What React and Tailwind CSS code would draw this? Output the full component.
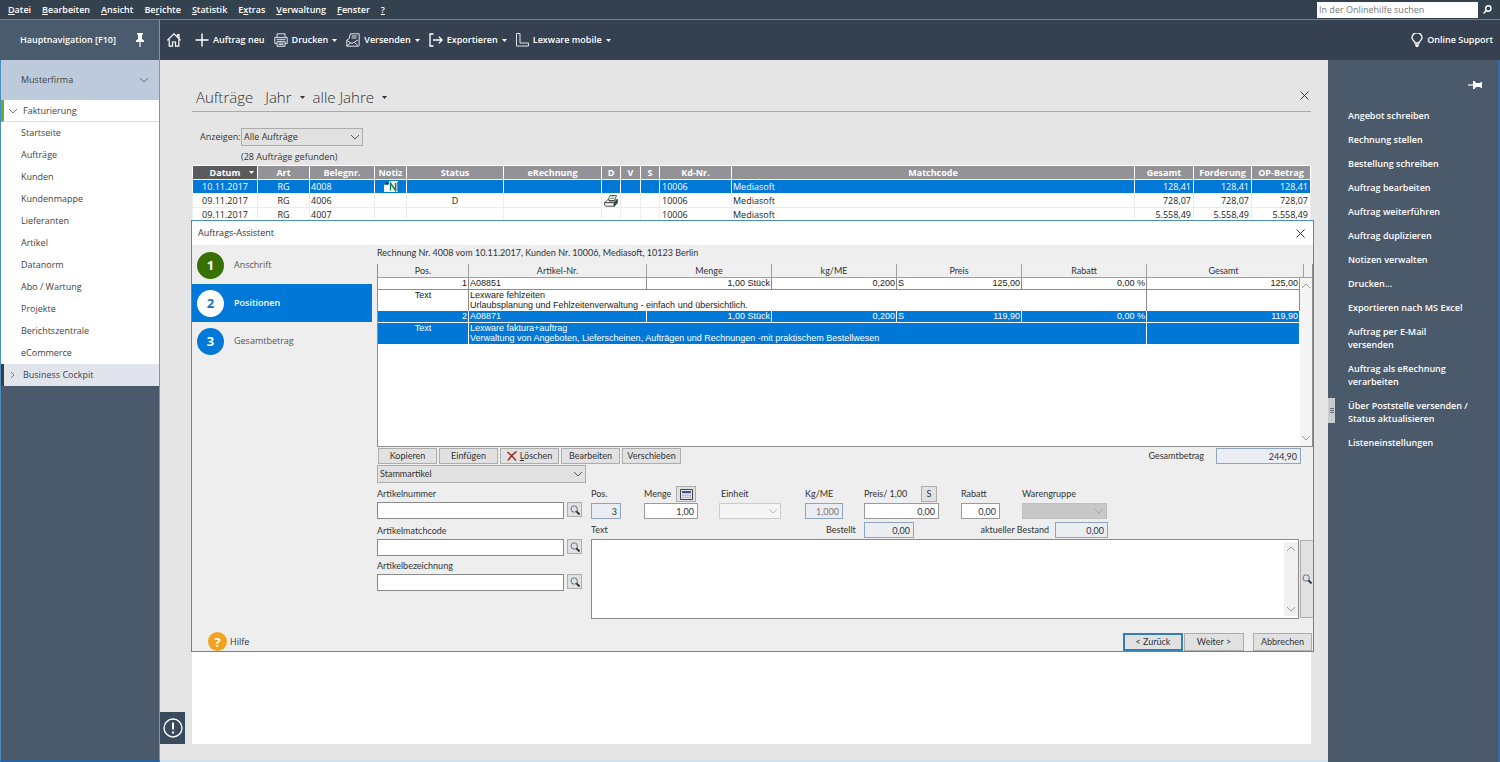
import clsx from 'clsx';

const MENU = [
  ['', 'D', 'atei'],
  ['', 'B', 'earbeiten'],
  ['', 'A', 'nsicht'],
  ['Be', 'r', 'ichte'],
  ['', 'S', 'tatistik'],
  ['E', 'x', 'tras'],
  ['', 'V', 'erwaltung'],
  ['', 'F', 'enster'],
  ['', '?', ''],
];

const NAV_ITEMS = [
  'Startseite',
  'Aufträge',
  'Kunden',
  'Kundenmappe',
  'Lieferanten',
  'Artikel',
  'Datanorm',
  'Abo / Wartung',
  'Projekte',
  'Berichtszentrale',
  'eCommerce',
];

const ACTIONS = [
  'Angebot schreiben',
  'Rechnung stellen',
  'Bestellung schreiben',
  'Auftrag bearbeiten',
  'Auftrag weiterführen',
  'Auftrag duplizieren',
  'Notizen verwalten',
  'Drucken...',
  'Exportieren nach MS Excel',
  'Auftrag per E-Mail versenden',
  'Auftrag als eRechnung verarbeiten',
  'Über Poststelle versenden / Status aktualisieren',
  'Listeneinstellungen',
];

const ORDER_COLUMNS = [
  { label: 'Datum', width: 'w-[65px]' },
  { label: 'Art', width: 'w-[52px]' },
  { label: 'Belegnr.', width: 'w-[65px]' },
  { label: 'Notiz', width: 'w-[32px]' },
  { label: 'Status', width: 'w-[97px]' },
  { label: 'eRechnung', width: 'w-[98px]' },
  { label: 'D', width: 'w-[19px]' },
  { label: 'V', width: 'w-[20px]' },
  { label: 'S', width: 'w-[19px]' },
  { label: 'Kd-Nr.', width: 'w-[72px]' },
  { label: 'Matchcode', width: '' },
  { label: 'Gesamt', width: 'w-[59px]' },
  { label: 'Forderung', width: 'w-[58px]' },
  { label: 'OP-Betrag', width: 'w-[59px]' },
];

const ORDERS = [
  { date: '10.11.2017', type: 'RG', number: '4008', note: true, status: '', printed: false, amount: '128,41' },
  { date: '09.11.2017', type: 'RG', number: '4006', note: false, status: 'D', printed: true, amount: '728,07' },
  { date: '09.11.2017', type: 'RG', number: '4007', note: false, status: '', printed: false, amount: '5.558,49' },
];

const POSITIONS = [
  {
    pos: 1,
    article: 'A08851',
    price: '125,00',
    title: 'Lexware fehlzeiten',
    text: 'Urlaubsplanung und Fehlzeitenverwaltung - einfach und übersichtlich.',
  },
  {
    pos: 2,
    article: 'A08871',
    price: '119,90',
    title: 'Lexware faktura+auftrag',
    text: 'Verwaltung von Angeboten, Lieferscheinen, Aufträgen und Rechnungen -mit praktischem Bestellwesen',
  },
];

const STEPS = [
  { label: 'Anschrift', circle: 'bg-[#387002] text-white' },
  { label: 'Positionen', circle: 'bg-white text-[#1b6fb5]', active: true },
  { label: 'Gesamtbetrag', circle: 'bg-[#0078d7] text-white' },
];

function Chevron({ className, d = 'M1 1l4 4 4-4' }) {
  return (
    <svg viewBox="0 0 10 6" className={clsx('h-[6px] w-[10px] fill-none stroke-current', className)}>
      <path d={d} />
    </svg>
  );
}

function Caret({ className }) {
  return (
    <svg viewBox="0 0 5 3" className={clsx('h-[3px] w-[5px] fill-current', className)}>
      <path d="M0 0h5L2.5 3z" />
    </svg>
  );
}

function CloseIcon() {
  return (
    <svg viewBox="0 0 9 9" className="h-[9px] w-[9px] fill-none stroke-[#333]">
      <path d="M.5.5l8 8M8.5.5l-8 8" />
    </svg>
  );
}

function HomeIcon() {
  return (
    <svg viewBox="0 0 16 16" className="size-4 fill-none stroke-white stroke-[1.2]">
      <path d="M1.300 8.400L8 1.800l6.700 6.600M11.500 5V2.600h1.500v3.800M3.200 7.500v6.700h3.300V10h3v4.200h3.300V7.500" />
    </svg>
  );
}

function PlusIcon() {
  return (
    <svg viewBox="0 0 14 14" className="size-[14px] fill-none stroke-white stroke-[1.4]">
      <path d="M7 .5v13M.5 7h13" />
    </svg>
  );
}

function PrinterIcon() {
  return (
    <svg viewBox="0 0 14 14" className="size-[14px] fill-none stroke-[#dde3e9]">
      <path d="M3 4V.8h8V4M3 10.500H.8V4.400h12.400v6.100H11M2.500 6.300h9M3 8.300h8v5H3zM4.500 10h5M4.500 11.600h5" />
    </svg>
  );
}

function SendIcon() {
  return (
    <svg viewBox="0 0 14 14" className="size-[14px] fill-none stroke-[#dde3e9]">
      <path d="M3.200 5.500L4.300.8h8.900v11.500M5.800 3h5M5.500 5h5M3.200 5.500L.8 7v6.200h11.700l.7-1M.8 7.500l5.200 3 6-3.500M.8 13l4-3.200M12.300 13L8.500 9.500" />
    </svg>
  );
}

function ExportIcon() {
  return (
    <svg viewBox="0 0 14 14" className="size-[14px] fill-none stroke-white stroke-[1.3]">
      <path d="M4.500 1H1v12h3.500M4 7h9M9.800 3.600L13.200 7l-3.400 3.400" />
    </svg>
  );
}

function LexwareIcon() {
  return (
    <svg viewBox="0 0 13 14" className="h-[14px] w-[13px] fill-none stroke-[#dde3e9]">
      <path d="M.5.5h3.500v9.500h8.500v3H.5z" />
    </svg>
  );
}

function BulbIcon() {
  return (
    <svg viewBox="0 0 12 14" className="h-[14px] w-3 fill-none stroke-white stroke-[1.3]">
      <path d="M4 10c0-2-3-2.500-3-5.200a5 5 0 0110 0C11 7.500 8 8 8 10zM4 12h4M4.800 13.400h2.400" />
    </svg>
  );
}

function PinIcon({ className }) {
  return (
    <svg viewBox="0 0 8 14" className={clsx('h-[14px] w-2 fill-white', className)}>
      <path d="M1 0h6v1.500H6V6l2 1.500V9H0V7.500L2 6V1.500H1z" />
      <path d="M3 9h2v5H3z" opacity=".6" />
    </svg>
  );
}

function NoteIcon() {
  return (
    <svg viewBox="0 0 14 11" className="h-[11px] w-[14px]">
      <path d="M0 3.500h5V0h9v11H0z" fill="#fff" />
      <path d="M.5 3.500L4 .5v3z" fill="#123" />
      <path d="M6.500 9.500V2l5 7.500V2" fill="none" stroke="#1c7a4a" strokeWidth="1.400" />
      <path d="M13.300 1v9.500" stroke="#333" fill="none" strokeWidth=".8" />
    </svg>
  );
}

function PrintedIcon() {
  return (
    <svg viewBox="0 0 14 12" className="h-3 w-[14px]">
      <path d="M4 5.500L6 .5h6.500l-2 5z" fill="#fff" stroke="#333" strokeWidth=".8" />
      <path d="M6 3.500h4M6.800 2h4" stroke="#4a8a4a" strokeWidth=".7" />
      <path d="M.5 7.500L3.500 4.800h2L5 6h5.500l.5-1.200h2.300l-3 2.700z" fill="#e4ece4" stroke="#333" strokeWidth=".7" />
      <path d="M.5 7.500h9.800v3.800H1.500l-1-1z" fill="#c4dcc0" stroke="#333" strokeWidth=".7" />
      <path d="M10.300 7.500l3-3v3.600l-3 3.200z" fill="#2f5a2f" stroke="#222" strokeWidth=".7" />
      <path d="M2 9.500h6.500" stroke="#fff" />
    </svg>
  );
}

function LensIcon() {
  return (
    <svg viewBox="0 0 10 10" className="size-[10px] flex-none fill-none">
      <circle cx="4.200" cy="4" r="3.200" fill="#d5e2ea" stroke="#666" strokeWidth=".9" />
      <path d="M6.500 6.300l3 3.200" stroke="#223" strokeWidth="1.800" />
    </svg>
  );
}

function CalculatorIcon() {
  return (
    <svg viewBox="0 0 13 11" className="h-[11px] w-[13px]">
      <path d="M.5.5h12v10H.5z" fill="#e8e8f2" stroke="#444" />
      <path d="M2 2h9v2.200H2z" fill="#4a4f8c" />
      <path d="M2 6.200h9M2 8.300h9" stroke="#8a8aa0" strokeDasharray="1.500 1" />
    </svg>
  );
}

function SelectBox({ id, label, options = [''], disabled, className, chevron = 'text-[#555]' }) {
  return (
    <div className="relative flex">
      <select
        id={id}
        aria-label={label}
        disabled={disabled}
        className={clsx('w-full appearance-none rounded-none border pl-[2px] opacity-100 outline-none', className)}
      >
        {options.map((option) => (
          <option key={option}>{option}</option>
        ))}
      </select>
      <Chevron className={clsx('pointer-events-none absolute top-1/2 right-[3px] -translate-y-1/2', chevron)} />
    </div>
  );
}

function PushButton({ children, className }) {
  return (
    <button
      type="button"
      className={clsx('flex items-center justify-center border bg-[#e1e1e1] whitespace-nowrap', className)}
    >
      {children}
    </button>
  );
}

function NumberField({ id, value, readOnly, className }) {
  return (
    <input
      id={id}
      defaultValue={value}
      readOnly={readOnly}
      className={clsx(
        'h-4 rounded-none border px-[3px] text-right outline-none',
        readOnly ? 'border-[#8fa5bd] bg-[#eaeef3]' : 'border-[#9a9a9a] bg-white',
        className,
      )}
    />
  );
}

function MenuBar() {
  return (
    <header className="flex h-5 flex-none items-center justify-between border-b border-[#6e8391] bg-[#34424f] font-semibold text-white">
      <nav className="flex gap-[11px] pl-2">
        {MENU.map(([before, key, after]) => (
          <button key={before + key + after} type="button">
            {before}
            <span className="underline underline-offset-1">{key}</span>
            {after}
          </button>
        ))}
      </nav>
      <form className="flex items-center gap-[5px] pr-2">
        <input
          aria-label="In der Onlinehilfe suchen"
          placeholder="In der Onlinehilfe suchen"
          className="h-4 w-[161px] bg-white px-[2px] font-normal text-black outline-none placeholder:text-[#777]"
        />
        <button type="button" aria-label="Suchen">
          <svg viewBox="0 0 9 9" className="size-[9px] fill-none stroke-white stroke-[1.4]">
            <circle cx="5.300" cy="3.500" r="2.700" />
            <path d="M3.300 5.600L.6 8.400" />
          </svg>
        </button>
      </form>
    </header>
  );
}

function ToolButton({ icon, label, menu, className }) {
  return (
    <button type="button" className={clsx('flex items-center gap-1 whitespace-nowrap', className)}>
      {icon}
      {label}
      {menu && <Caret />}
    </button>
  );
}

function Toolbar() {
  return (
    <div className="flex h-10 flex-none bg-[#354151] font-semibold text-white">
      <div className="flex w-40 flex-none items-center justify-between border-r border-[#8096a6] bg-[#495b6c] pr-[15px] pl-5">
        Hauptnavigation [F10]
        <button type="button" aria-label="Navigation anheften">
          <PinIcon />
        </button>
      </div>
      <div className="flex flex-1 items-center pr-[7px] pl-[6px]">
        <button type="button" aria-label="Startseite">
          <HomeIcon />
        </button>
        <ToolButton icon={<PlusIcon />} label="Auftrag neu" className="ml-[13px]" />
        <ToolButton icon={<PrinterIcon />} label="Drucken" menu className="ml-[9px]" />
        <ToolButton icon={<SendIcon />} label="Versenden" menu className="ml-[9px]" />
        <ToolButton icon={<ExportIcon />} label="Exportieren" menu className="ml-[9px]" />
        <ToolButton icon={<LexwareIcon />} label="Lexware mobile" menu className="ml-[9px]" />
        <ToolButton icon={<BulbIcon />} label="Online Support" className="ml-auto" />
      </div>
    </div>
  );
}

function Sidebar() {
  return (
    <aside className="flex w-40 flex-none flex-col border-r border-b-2 border-l border-r-[#8096a6] border-b-[#2f6398] border-l-[#4a8fc0] bg-[#4a5a6a] text-[#444]">
      <button type="button" className="flex h-10 items-center justify-between bg-[#bccadb] pr-[10px] pl-5">
        Musterfirma
        <Chevron className="text-[#5b6b7d]" />
      </button>
      <nav className="flex flex-col bg-white">
        <button type="button" className="flex h-[22px] items-center border-b border-l-3 border-b-[#d5dce4] border-l-[#5fae46] pl-1">
          <Chevron className="mr-[5px] w-2 text-[#777]" />
          Fakturierung
        </button>
        {NAV_ITEMS.map((item) => (
          <a key={item} href="#" className="flex h-[22px] items-center pl-5">
            {item}
          </a>
        ))}
        <button type="button" className="flex h-[22px] items-center border-l-3 border-l-[#333d48] bg-[#e1e4ed] pl-1">
          <Chevron className="mr-[5px] w-2 text-[#777]" d="M3 0l3 3-3 3" />
          Business Cockpit
        </button>
      </nav>
    </aside>
  );
}

function OrderTable() {
  return (
    <table className="w-full table-fixed border-collapse text-[#222]">
      <colgroup>
        {ORDER_COLUMNS.map((column) => (
          <col key={column.label} className={column.width} />
        ))}
      </colgroup>
      <thead>
        <tr className="h-[14px] text-white">
          {ORDER_COLUMNS.map((column, i) => (
            <th
              key={column.label}
              className={clsx('relative border border-white p-0 leading-[13px] font-bold', i === 0 ? 'bg-[#5b5b5d]' : 'bg-[#929297]')}
            >
              {column.label}
              {i === 0 && <Caret className="absolute top-[5px] right-[3px]" />}
            </th>
          ))}
        </tr>
      </thead>
      <tbody>
        {ORDERS.map((order, i) => (
          <tr
            key={order.number}
            className={clsx(
              'h-[14px] leading-[12px] [&>td]:border [&>td]:border-t-0 [&>td]:p-0',
              i === 0 ? 'bg-[#0078d7] text-white [&>td]:border-white' : '[&>td]:border-[#ececec]',
            )}
          >
            <td className="text-center">{order.date}</td>
            <td className="text-center">{order.type}</td>
            <td className="pl-px!">{order.number}</td>
            <td>{order.note && <div className="flex justify-center"><NoteIcon /></div>}</td>
            <td className="text-center">{order.status}</td>
            <td />
            <td>{order.printed && <div className="flex justify-center"><PrintedIcon /></div>}</td>
            <td />
            <td />
            <td className="pl-[2px]!">10006</td>
            <td className="pl-px!">Mediasoft</td>
            <td className="pr-[2px]! text-right">{order.amount}</td>
            <td className="pr-[2px]! text-right">{order.amount}</td>
            <td className="pr-[2px]! text-right">{order.amount}</td>
          </tr>
        ))}
      </tbody>
    </table>
  );
}

function PositionRows({ position, selected }) {
  const line = selected ? '[&>td]:border-white' : '[&>td]:border-[#8c8c8c]';
  const row = clsx('[&>td]:p-0 [&>td]:px-px [&>td]:border-r', line, selected ? 'bg-[#0078d7] text-white' : 'bg-white text-[#222]');
  return (
    <>
      <tr className={clsx('h-3 text-right leading-[11px] [&>td]:border-b', row)}>
        <td>{position.pos}</td>
        <td className="text-left">{position.article}</td>
        <td>1,00 Stück</td>
        <td>0,200</td>
        <td>
          <div className="flex justify-between">
            <span>S</span>
            {position.price}
          </div>
        </td>
        <td>0,00 %</td>
        <td>{position.price}</td>
      </tr>
      <tr className={clsx('h-[21px] align-top leading-[10px]', row)}>
        <td className="text-center">Text</td>
        <td colSpan={5}>
          {position.title}
          <br />
          {position.text}
        </td>
        <td />
      </tr>
    </>
  );
}

function PositionTable() {
  return (
    <div className="flex h-[183px] border border-t-0 border-[#8c8c8c] bg-white">
      <div className="flex-1">
        <table className="w-full table-fixed border-separate border-spacing-0 font-[Liberation_Sans]">
          <colgroup>
            <col className="w-[91px]" />
            <col className="w-[178px]" />
            <col className="w-[125px]" />
            <col className="w-[125px]" />
            <col className="w-[125px]" />
            <col className="w-[125px]" />
            <col />
          </colgroup>
          <thead>
            <tr className="h-[14px] bg-[#f0f0f0] font-[Lato] leading-[13px] text-[#333]">
              {['Pos.', 'Artikel-Nr.', 'Menge', 'kg/ME', 'Preis', 'Rabatt', 'Gesamt'].map((label) => (
                <th key={label} className="border-r border-b border-[#a0a0a0] p-0 font-normal last:border-r-0">
                  {label}
                </th>
              ))}
            </tr>
          </thead>
          <tbody>
            {POSITIONS.map((position) => (
              <PositionRows key={position.pos} position={position} selected={position.pos === 2} />
            ))}
          </tbody>
        </table>
      </div>
      <div className="flex w-3 flex-col">
        <div className="h-[14px] border-b border-[#a0a0a0] bg-[#f0f0f0]">
          <div className="h-full w-1 border-r border-[#a0a0a0]" />
        </div>
        <div className="flex flex-1 flex-col items-center justify-between bg-[#f5f5f5] py-[5px] text-[#999]">
          <Chevron className="w-2" d="M1 5l4-4 4 4" />
          <Chevron className="w-2" />
        </div>
      </div>
    </div>
  );
}

function SearchField({ id, label, className }) {
  return (
    <div className={className}>
      <label htmlFor={id} className="block h-[17px] leading-[17px]">
        {label}
      </label>
      <div className="flex gap-[3px]">
        <input id={id} className="h-[17px] w-[187px] rounded-none border border-[#8a8a8a] bg-white px-1 outline-none" />
        <button type="button" aria-label={`${label} suchen`} className="flex size-[15px] items-center justify-center border border-[#adadad] bg-[#e1e1e1]">
          <LensIcon />
        </button>
      </div>
    </div>
  );
}

function PositionForm() {
  return (
    <div className="flex">
      <div className="w-[214px] flex-none">
        <div className="w-[209px]">
          <SelectBox label="Artikelart" options={['Stammartikel']} className="h-[18px] border-[#adadad] bg-[#e1e1e1]" />
        </div>
        <SearchField id="artikelnummer" label="Artikelnummer" className="mt-[2px]" />
        <SearchField id="matchcode" label="Artikelmatchcode" className="mt-[3px]" />
        <SearchField id="bezeichnung" label="Artikelbezeichnung" className="mt-px" />
      </div>
      <div className="flex-1 pt-[21px]">
        <div className="grid grid-cols-[53px_75px_86px_59px_97px_61px_1fr] items-center">
          <label htmlFor="pos">Pos.</label>
          <div className="flex items-center gap-[5px]">
            <label htmlFor="menge">Menge</label>
            <button type="button" aria-label="Rechner" className="flex h-4 w-5 items-center justify-center border border-[#adadad] bg-[#e1e1e1]">
              <CalculatorIcon />
            </button>
          </div>
          <label htmlFor="einheit" className="pl-[2px]">Einheit</label>
          <label htmlFor="kgme">Kg/ME</label>
          <div className="flex w-[73px] items-center justify-between">
            <label htmlFor="preis">Preis/ 1,00</label>
            <button type="button" className="size-4 border border-[#adadad] bg-[#e1e1e1] leading-[14px]">S</button>
          </div>
          <label htmlFor="rabatt">Rabatt</label>
          <label htmlFor="warengruppe">Warengruppe</label>
        </div>
        <div className="mt-px grid grid-cols-[53px_75px_86px_59px_97px_61px_1fr] items-center text-[#333]">
          <NumberField id="pos" value="3" readOnly className="w-[30px]" />
          <NumberField id="menge" value="1,00" className="w-[54px]" />
          <div className="w-[62px]">
            <SelectBox id="einheit" disabled className="h-4 border-[#ccc] bg-[#f5f5f5]" chevron="text-[#bbb]" />
          </div>
          <NumberField id="kgme" value="1,000" readOnly className="w-[38px] text-[#777]" />
          <NumberField id="preis" value="0,00" className="w-[75px]" />
          <NumberField id="rabatt" value="0,00" className="w-[39px]" />
          <div className="w-[85px]">
            <SelectBox id="warengruppe" disabled className="h-4 border-[#bfbfbf] bg-[#c8c8c8]" chevron="text-[#a5a5a5]" />
          </div>
        </div>
        <div className="mt-[3px] flex items-center">
          <label htmlFor="text" className="w-[235px]">Text</label>
          <label htmlFor="bestellt" className="w-[38px]">Bestellt</label>
          <NumberField id="bestellt" value="0,00" readOnly className="w-[50px]" />
          <label htmlFor="bestand" className="w-[141px] pr-[6px] text-right">aktueller Bestand</label>
          <NumberField id="bestand" value="0,00" readOnly className="w-[53px]" />
        </div>
        <div className="mt-px flex">
          <div className="flex h-20 flex-1 border border-[#8a8a8a] bg-white">
            <textarea id="text" className="flex-1 resize-none p-1 outline-none" />
            <div className="my-[2px] flex w-[14px] flex-col items-center justify-between bg-[#f0f0f0] py-1 text-[#999]">
              <Chevron className="w-2" d="M1 5l4-4 4 4" />
              <Chevron className="w-2" />
            </div>
          </div>
          <button type="button" aria-label="Text suchen" className="my-px ml-px flex w-[13px] items-center border border-r-0 border-[#adadad] bg-[#e1e1e1] pl-px">
            <LensIcon />
          </button>
        </div>
      </div>
    </div>
  );
}

function Assistant() {
  return (
    <section className="absolute top-[160px] right-[14px] left-[31px] border border-[#4a8fb5] bg-[#eee] text-[#333]">
      <div className="flex h-6 items-center justify-between bg-white pr-2 pl-[6px]">
        <h2>Auftrags-Assistent</h2>
        <button type="button" aria-label="Schließen">
          <CloseIcon />
        </button>
      </div>
      <div className="flex">
        <ol className="mt-px w-[180px] flex-none">
          {STEPS.map((step, i) => (
            <li
              key={step.label}
              className={clsx(
                'flex h-[38px] items-center gap-[10px] pl-[5px]',
                step.active ? 'bg-[#0078d7] font-semibold text-white' : 'text-[#555]',
              )}
            >
              <span className={clsx('flex size-[27px] items-center justify-center rounded-full text-[13px] font-bold', step.circle)}>
                {i + 1}
              </span>
              {step.label}
            </li>
          ))}
        </ol>
        <div className="flex-1 pl-[5px] font-[Lato]">
          <p className="h-[19px] leading-4">Rechnung Nr. 4008 vom 10.11.2017, Kunden Nr. 10006, Mediasoft, 10123 Berlin</p>
          <PositionTable />
          <div className="mt-px mb-px flex justify-between pr-3 pl-px">
            <div className="flex gap-[2px]">
              <PushButton className="h-4 w-[59px] border-[#adadad]">Kopieren</PushButton>
              <PushButton className="h-4 w-[59px] border-[#adadad]">Einfügen</PushButton>
              <PushButton className="h-4 w-[59px] gap-[3px] border-[#adadad]">
                <svg viewBox="0 0 10 10" className="size-[10px] fill-none stroke-[#a01818] stroke-[1.4]">
                  <path d="M.5 1C3.500 3.500 6 6 9 9.500M9.500.5C6 3 3 6 1 9.500" />
                </svg>
                <span>
                  <span className="underline">L</span>öschen
                </span>
              </PushButton>
              <PushButton className="h-4 w-[59px] border-[#adadad]">Bearbeiten</PushButton>
              <PushButton className="h-4 w-[59px] border-[#adadad]">Verschieben</PushButton>
            </div>
            <div className="flex items-center gap-3">
              <label htmlFor="gesamt">Gesamtbetrag</label>
              <NumberField id="gesamt" value="244,90" readOnly className="w-[85px]" />
            </div>
          </div>
          <PositionForm />
        </div>
      </div>
      <div className="mt-[13px] flex items-center justify-between pr-px pl-4">
        <button type="button" className="flex items-center gap-[3px]">
          <span className="flex size-[19px] items-center justify-center rounded-full bg-[#f0a422] text-[13px] font-bold text-white">?</span>
          Hilfe
        </button>
        <div className="flex font-[Lato]">
          <PushButton className="h-[18px] w-[60px] border-2 border-[#2f7fb8]">&lt; Zurück</PushButton>
          <PushButton className="ml-px h-[18px] w-[60px] border-[#adadad]">Weiter &gt;</PushButton>
          <PushButton className="ml-[9px] h-[18px] w-[59px] border-[#adadad]">Abbrechen</PushButton>
        </div>
      </div>
    </section>
  );
}

function Orders() {
  return (
    <main className="relative flex flex-1 flex-col border-b-2 border-[#cfe0f0] bg-[#e5e5e5] pr-[17px] pb-4 pl-8">
      <div className="flex h-13 items-end justify-between border-b border-[#aaa] pr-[2px] pb-1 pl-1 text-[#333]">
        <h1 className="flex items-center text-[15px] leading-5 font-light">
          Aufträge
          <button type="button" className="ml-3 flex items-center gap-2">
            Jahr
            <Caret />
          </button>
          <button type="button" className="ml-2 flex items-center gap-2">
            alle Jahre
            <Caret />
          </button>
        </h1>
        <button type="button" aria-label="Schließen" className="mb-[7px]">
          <CloseIcon />
        </button>
      </div>
      <div className="mt-4 flex items-center text-[#333]">
        <label htmlFor="anzeigen" className="w-[49px] pl-2">Anzeigen:</label>
        <div className="w-[122px]">
          <SelectBox id="anzeigen" options={['Alle Aufträge']} className="h-[18px] border-[#adadad] bg-[#e1e1e1]" />
        </div>
      </div>
      <p className="mt-[3px] mb-px h-[15px] pl-[49px] leading-[15px] text-[#333]">(28 Aufträge gefunden)</p>
      <div className="flex-1 bg-white">
        <OrderTable />
      </div>
      <Assistant />
      <button
        type="button"
        aria-label="Hinweise"
        className="absolute bottom-4 left-0 flex h-8 w-[25px] items-center justify-center bg-[#3a4a5d]"
      >
        <svg viewBox="0 0 20 20" className="size-5 fill-none stroke-white stroke-[1.4]">
          <circle cx="10" cy="10" r="9" />
          <path d="M10 4.500v7M10 13.500v2" strokeWidth="2" />
        </svg>
      </button>
    </main>
  );
}

function ActionPanel() {
  return (
    <aside className="relative w-[172px] flex-none border-r-2 border-r-[#3568a8] bg-[#4a5a6a] pt-[19px] pl-5 font-semibold text-white">
      <div className="flex justify-end pr-4">
        <button type="button" aria-label="Aktionen anheften" className="flex h-3 w-[14px] items-center justify-center">
          <PinIcon className="rotate-90" />
        </button>
      </div>
      <ul className="mt-[18px] flex w-[122px] flex-col gap-[11px] leading-[13px]">
        {ACTIONS.map((action) => (
          <li key={action}>
            <a href="#" className="block">{action}</a>
          </li>
        ))}
      </ul>
      <div className="absolute top-[338px] left-0 flex h-[25px] w-[7px] flex-col items-center justify-center gap-px bg-[#c8cccd]">
        <span className="h-px w-1 bg-[#667]" />
        <span className="h-px w-1 bg-[#667]" />
        <span className="h-px w-1 bg-[#667]" />
      </div>
    </aside>
  );
}

export default function App() {
  return (
    <div className="flex min-h-screen flex-col font-['Open_Sans','Noto_Sans',sans-serif] text-[9px] leading-3">
      <MenuBar />
      <Toolbar />
      <div className="flex flex-1">
        <Sidebar />
        <Orders />
        <ActionPanel />
      </div>
    </div>
  );
}
